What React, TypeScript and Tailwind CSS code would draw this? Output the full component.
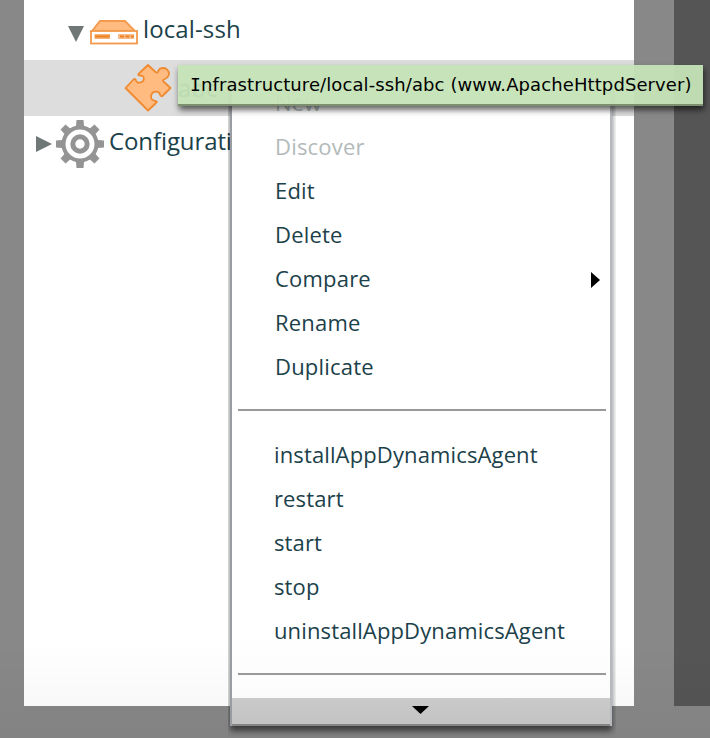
import React from "react";

function Server() {
  return (
    <svg width="50" height="26" viewBox="0 0 50 26" className="block shrink-0" fill="none">
      <path d="M3 12 L11 2 H36 L46 12 Z" fill="#ffbb80" stroke="#f39a4c" strokeWidth="1.8" />
      <rect x="2" y="12" width="46" height="12.5" fill="#fff" stroke="#f39a4c" strokeWidth="1.8" />
      <path d="M5.500 17.5H21" stroke="#f6b178" strokeWidth="5" />
      <path d="M6 17.5H20.500" stroke="#ec8120" strokeWidth="2" />
      <path d="M29 17.5H45" stroke="#f8bd8a" strokeWidth="5" />
      <path d="M31 17.5H45" stroke="#ec8120" strokeWidth="2" strokeDasharray="4 1.5" />
    </svg>
  );
}

function Puzzle() {
  return (
    <svg width="48" height="48" viewBox="0 0 48 48" className="block shrink-0">
      <path
        d="M24 1 L31.500 8 Q34 9.500 34.500 6.500 C36 3.500 41 3 43.500 6 C46.500 9.500 44.500 13.500 41 15 Q38 16 39.500 17.500 L46.500 24 L39 31.500 Q37 33.500 36 30.500 C35 26 28 27 27.300 31 C26.500 35 28 36.500 31 37 Q34 37.500 32 39 L24 46.500 L1.500 24 L9.500 15.500 Q11.500 14 12 16.500 C13 20 19.500 19 19.800 15 C20 12 18 11.500 16 11.500 Q13 11 15 9.500 Z"
        fill="#ffbb80"
        stroke="#f08a30"
        strokeWidth="1.800"
        strokeLinejoin="round"
      />
    </svg>
  );
}

function Gear() {
  return (
    <svg width="48" height="48" viewBox="0 0 48 48" className="block shrink-0" fill="none" stroke="#949494">
      <g fill="#949494" stroke="none">
        {[0, 45, 90, 135, 180, 225, 270, 315].map((a) => (
          <path key={a} d="M17 9 L20 6 L20.500 0 H27.500 L28 6 L31 9 Z" transform={`rotate(${a} 24 24)`} />
        ))}
      </g>
      <circle cx="24" cy="24" r="16.500" strokeWidth="4" />
      <circle cx="24" cy="24" r="7.200" strokeWidth="5" />
    </svg>
  );
}

function Item({ label, muted, arrow, action }: { label: string; muted?: boolean; arrow?: boolean; action?: boolean }) {
  return (
    <div
      className={`flex h-11 items-center justify-between pr-2.5 text-[22px] leading-[44px] ${
        action ? "pl-[42px] tracking-[0.13px]" : "pl-[43px] tracking-[0.2px]"
      } ${muted ? "text-[#b3baba]" : "text-[#1b414a]"}`}
    >
      <span>{label}</span>
      {arrow && (
        <svg width="9" height="16" viewBox="0 0 9 16" className="mt-1">
          <path d="M0 0L9 8L0 16Z" fill="#000" />
        </svg>
      )}
    </div>
  );
}

function Divider() {
  return (
    <div className="flex h-11 items-center pr-1 pl-1.5">
      <div className="h-0.5 w-full bg-[#999]" />
    </div>
  );
}

export default function App() {
  return (
    <div className="relative h-[738px] w-[710px] overflow-hidden bg-[#888] font-['Open_Sans',sans-serif] text-[#1b414a]">
      <div className="flex h-[706px]">
        <div className="ml-6 w-[610px] bg-white text-[24px] leading-8">
          <div className="flex h-[60px] pl-[44px]">
            <svg width="16" height="16" viewBox="0 0 16 16" className="mt-[26px] shrink-0">
              <path d="M0 0H16L8 16Z" fill="#707777" />
            </svg>
            <div className="mt-[19px] ml-[5px]">
              <Server />
            </div>
            <span className="mt-[13px] ml-[4px] tracking-[0.12px]">local-ssh</span>
          </div>
          <div className="flex h-14 bg-[#ddd] pl-[100px]">
            <div className="mt-1">
              <Puzzle />
            </div>
            <span className="mt-3 ml-1.5">abc</span>
          </div>
          <div className="flex h-14 pl-3">
            <svg width="16" height="16" viewBox="0 0 16 16" className="mt-5 shrink-0">
              <path d="M0 0V16L16 8Z" fill="#707777" />
            </svg>
            <div className="mt-1 ml-1">
              <Gear />
            </div>
            <span className="mt-[9px] ml-[5px] tracking-[-0.1px]">Configuration</span>
          </div>
        </div>
        <div className="ml-10 w-9 bg-[#555]" />
      </div>
      <div className="absolute inset-x-0 bottom-0 h-24 bg-gradient-to-b from-black/0 to-black/4" />

      <div className="absolute top-20 left-[230px] h-[646px] w-[382px] shadow-[0_5px_6px_rgba(0,0,0,0.55)] [clip-path:inset(0_-4px_-12px_-2px)]">
        <div className="flex h-full flex-col border-r-2 border-l-2 border-r-[#b5b9bd] border-l-[#999da1] bg-gradient-to-b from-white from-85% to-[#fafafa]">
          <Item label="New" muted />
          <Item label="Discover" muted />
          <Item label="Edit" />
          <Item label="Delete" />
          <Item label="Compare" arrow />
          <Item label="Rename" />
          <Item label="Duplicate" />
          <Divider />
          <Item label="installAppDynamicsAgent" action />
          <Item label="restart" action />
          <Item label="start" action />
          <Item label="stop" action />
          <Item label="uninstallAppDynamicsAgent" action />
          <Divider />
          <div className="mt-auto flex h-7 shrink-0 items-start justify-center border-b-2 border-[#858585] bg-gradient-to-b from-[#cacaca] to-[#c3c3c3] pt-2 pr-[2px]">
            <svg width="17" height="8" viewBox="0 0 17 8">
              <path d="M0 0H17L8.500 8Z" fill="#000" />
            </svg>
          </div>
        </div>
      </div>

      <div className="absolute top-[65px] left-[178px] flex h-[41px] w-[525px] items-center border-b-2 border-[#7c9070] bg-[#c5e3b7]/95 pl-3 font-['DejaVu_Sans',sans-serif] text-[18px] tracking-[0.1px] whitespace-nowrap text-black shadow-[1px_4px_6px_rgba(0,0,0,0.6)]">
        <span className="font-['DejaVu_Sans_Mono',monospace] leading-none">I</span>
        <span>nfrastructure/local-ssh/abc (www.ApacheHttpdServer)</span>
      </div>
    </div>
  );
}
